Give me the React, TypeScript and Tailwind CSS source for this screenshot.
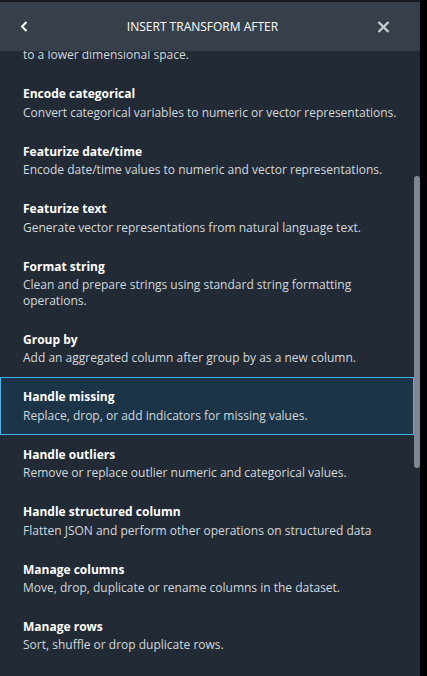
import { useLayoutEffect, useRef, type ReactNode } from "react"

type Transform = { name: string; desc: ReactNode }

const transforms: Transform[] = [
  {
    name: "Dimensionality Reduction",
    desc: (
      <>
        Reduce the dimensionality of the data by projecting it
        <br />
        to a lower dimensional space.
      </>
    ),
  },
  { name: "Encode categorical", desc: "Convert categorical variables to numeric or vector representations." },
  { name: "Featurize date/time", desc: "Encode date/time values to numeric and vector representations." },
  { name: "Featurize text", desc: "Generate vector representations from natural language text." },
  { name: "Format string", desc: "Clean and prepare strings using standard string formatting operations." },
  { name: "Group by", desc: "Add an aggregated column after group by as a new column." },
  { name: "Handle missing", desc: "Replace, drop, or add indicators for missing values." },
  { name: "Handle outliers", desc: "Remove or replace outlier numeric and categorical values." },
  { name: "Handle structured column", desc: "Flatten JSON and perform other operations on structured data" },
  { name: "Manage columns", desc: "Move, drop, duplicate or rename columns in the dataset." },
  { name: "Manage rows", desc: "Sort, shuffle or drop duplicate rows." },
  { name: "Manage vectors", desc: "Assemble, split or flatten vector columns." },
]

export default function App() {
  const listRef = useRef<HTMLDivElement>(null)

  useLayoutEffect(() => {
    if (listRef.current) listRef.current.scrollTop = 50
  }, [])

  return (
    <div className="w-[427px] h-[676px] bg-black flex overflow-hidden" style={{ fontFamily: "'Open Sans', sans-serif" }}>
      <div className="w-[420px] h-full flex flex-col">
        <div className="h-[2px] bg-[#16191f]" />
        <div className="h-[49px] bg-[#363f4a] flex items-center pl-[19px] pr-[30px] shrink-0">
          <button className="w-[10px] h-[12px] flex items-center justify-center">
            <svg width="8" height="11" viewBox="0 0 8 11" fill="none">
              <path d="M6.5 1 L2 5.5 L6.5 10" stroke="#ffffff" strokeWidth="2" />
            </svg>
          </button>
          <div className="flex-1 text-center text-white text-[12px]">INSERT TRANSFORM AFTER</div>
          <button className="w-[14px] h-[14px] flex items-center justify-center">
            <svg width="13" height="12" viewBox="0 0 13 12" fill="none">
              <path d="M1.5 1 L11.5 11 M11.5 1 L1.5 11" stroke="#c6cbd1" strokeWidth="2.4" />
            </svg>
          </button>
        </div>
        <div className="flex-1 flex bg-[#222a35] min-h-0">
          <div ref={listRef} className="flex-1 overflow-hidden">
            {transforms.map((t) => {
              const active = t.name === "Handle missing"
              return (
                <div
                  key={t.name}
                  className={`pl-[22px] pr-[14px] pt-[11px] pb-[10px] border ${active ? "bg-[#1b3448] border-[#44b4ec]" : "border-transparent"}`}
                >
                  <div className="text-white text-[12px] font-bold leading-[16px]">{t.name}</div>
                  <div className="mt-[2.4px] text-[#d3d9de] text-[12px] leading-[16px]">{t.desc}</div>
                </div>
              )
            })}
          </div>
          <div className="w-[6px] pt-[125px]">
            <div className="h-[292px] rounded-full bg-[#7c8695]" />
          </div>
        </div>
      </div>
    </div>
  )
}
